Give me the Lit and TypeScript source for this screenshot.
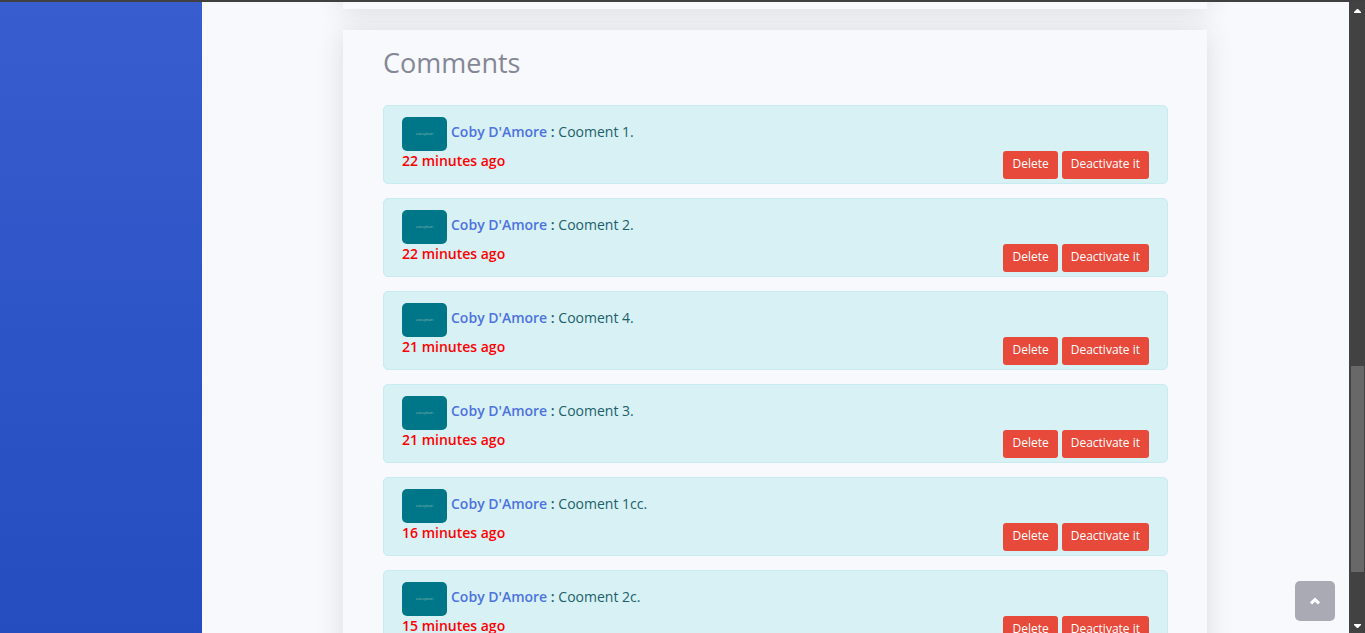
import { LitElement, html, css, svg } from "lit";
import { customElement, property } from "lit/decorators.js";

interface Comment {
  author: string;
  text: string;
  time: string;
}

const comments: Comment[] = [
  { author: "Coby D'Amore", text: "Cooment 1.", time: "22 minutes ago" },
  { author: "Coby D'Amore", text: "Cooment 2.", time: "22 minutes ago" },
  { author: "Coby D'Amore", text: "Cooment 4.", time: "21 minutes ago" },
  { author: "Coby D'Amore", text: "Cooment 3.", time: "21 minutes ago" },
  { author: "Coby D'Amore", text: "Cooment 1cc.", time: "16 minutes ago" },
  { author: "Coby D'Amore", text: "Cooment 2c.", time: "15 minutes ago" },
];

@customElement("comment-item")
export class CommentItem extends LitElement {
  @property({ attribute: false }) comment!: Comment;

  static styles = css`
    :host {
      display: block;
    }
    .item {
      box-sizing: border-box;
      padding: 11px 18px 4px;
      border: 1px solid #c7ebf1;
      border-radius: 5px;
      background: #d7f1f5;
      color: #1c606a;
      font-size: 14px;
      line-height: 20px;
    }
    .line {
      display: flex;
      align-items: center;
      gap: 4px;
    }
    .avatar {
      display: flex;
      align-items: center;
      justify-content: center;
      width: 45px;
      height: 34px;
      border-radius: 5px;
      background: #007788;
      color: #8fbcb4;
      font-size: 4px;
      line-height: 4px;
    }
    .author {
      color: #4e73df;
      font-weight: 600;
      text-decoration: none;
    }
    .colon {
      font-weight: 600;
    }
    .text {
      margin: 0;
      padding-bottom: 4px;
    }
    .foot {
      display: flex;
      justify-content: space-between;
      align-items: flex-start;
    }
    .time {
      color: #ff0000;
      font-weight: 600;
    }
    .actions {
      display: flex;
      gap: 4px;
    }
    .btn {
      height: 28px;
      padding: 0 9px 2px;
      border: 0;
      border-radius: 3px;
      background: #e74a3b;
      color: #ffffff;
      font-family: inherit;
      font-size: 12px;
      font-weight: 500;
      line-height: 18px;
    }
  `;

  render() {
    const { author, text, time } = this.comment;
    return html`
      <article class="item">
        <div class="line">
          <span class="avatar">excepturi</span>
          <p class="text"><a class="author" href="#">${author}</a> <strong class="colon">:</strong> ${text}</p>
        </div>
        <div class="foot">
          <span class="time">${time}</span>
          <div class="actions">
            <button class="btn" type="button">Delete</button>
            <button class="btn" type="button">Deactivate it</button>
          </div>
        </div>
      </article>
    `;
  }
}

@customElement("app-root")
export class AppRoot extends LitElement {
  static styles = css`
    :host {
      display: block;
      font-family: "Open Sans", "Noto Sans", sans-serif;
    }
    .page {
      box-sizing: border-box;
      display: flex;
      height: 100vh;
      overflow: hidden;
      border-top: 2px solid #404040;
      background: #f8f9fc;
    }
    .sidebar {
      flex: 0 0 202px;
      background: linear-gradient(180deg, #375dce, #254dc0);
    }
    .main {
      flex: 1;
      min-width: 0;
      padding: 0 142px 0 141px;
      overflow: hidden;
    }
    .card {
      background: #f8f9fc;
      box-shadow: 0 2px 25px rgba(58, 59, 69, 0.15);
    }
    .previous {
      height: 200px;
      margin: -193px 0 21px;
    }
    .comments {
      padding: 15px 39px 40px 40px;
    }
    .title {
      margin: 0 0 24px;
      color: #858796;
      font-size: 27px;
      font-weight: 400;
      line-height: 36px;
    }
    .list {
      display: flex;
      flex-direction: column;
      gap: 14px;
    }
    .scrollbar {
      display: flex;
      flex: 0 0 16px;
      flex-direction: column;
      align-items: center;
      background: #424242;
    }
    .track {
      display: flex;
      flex: 1;
      flex-direction: column;
      align-self: stretch;
      padding: 0 1px 0 2px;
    }
    .before {
      flex: 349;
    }
    .thumb {
      flex: 206;
      background: #686868;
    }
    .after {
      flex: 46;
    }
    .arrow {
      display: block;
      width: 16px;
      height: 15px;
      fill: #ffffff;
    }
    .top {
      position: fixed;
      right: 30px;
      bottom: 12px;
      display: flex;
      align-items: center;
      justify-content: center;
      width: 40px;
      height: 40px;
      border-radius: 5px;
      background: #a9aab4;
    }
    .chevron {
      width: 12px;
      height: 8px;
      fill: none;
      stroke: #ffffff;
      stroke-width: 3;
    }
  `;

  render() {
    return html`
      <div class="page">
        <nav class="sidebar" aria-label="Sidebar"></nav>
        <main class="main">
          <section class="card previous"></section>
          <section class="card comments">
            <h2 class="title">Comments</h2>
            <div class="list">
              ${comments.map((c) => html`<comment-item .comment=${c}></comment-item>`)}
            </div>
          </section>
        </main>
        <div class="scrollbar" aria-hidden="true">
          <svg class="arrow" viewBox="0 0 16 15">${svg`<path d="M5 11V10L8 7H9L12 10V11Z" />`}</svg>
          <div class="track">
            <div class="before"></div>
            <div class="thumb"></div>
            <div class="after"></div>
          </div>
          <svg class="arrow" viewBox="0 0 16 15">${svg`<path d="M5 6V7L8 10H9L12 7V6Z" />`}</svg>
        </div>
        <a class="top" href="#" aria-label="Scroll to top">
          <svg class="chevron" viewBox="0 0 12 8">${svg`<path d="M2 6.4L6 2.6L10 6.4" />`}</svg>
        </a>
      </div>
    `;
  }
}
